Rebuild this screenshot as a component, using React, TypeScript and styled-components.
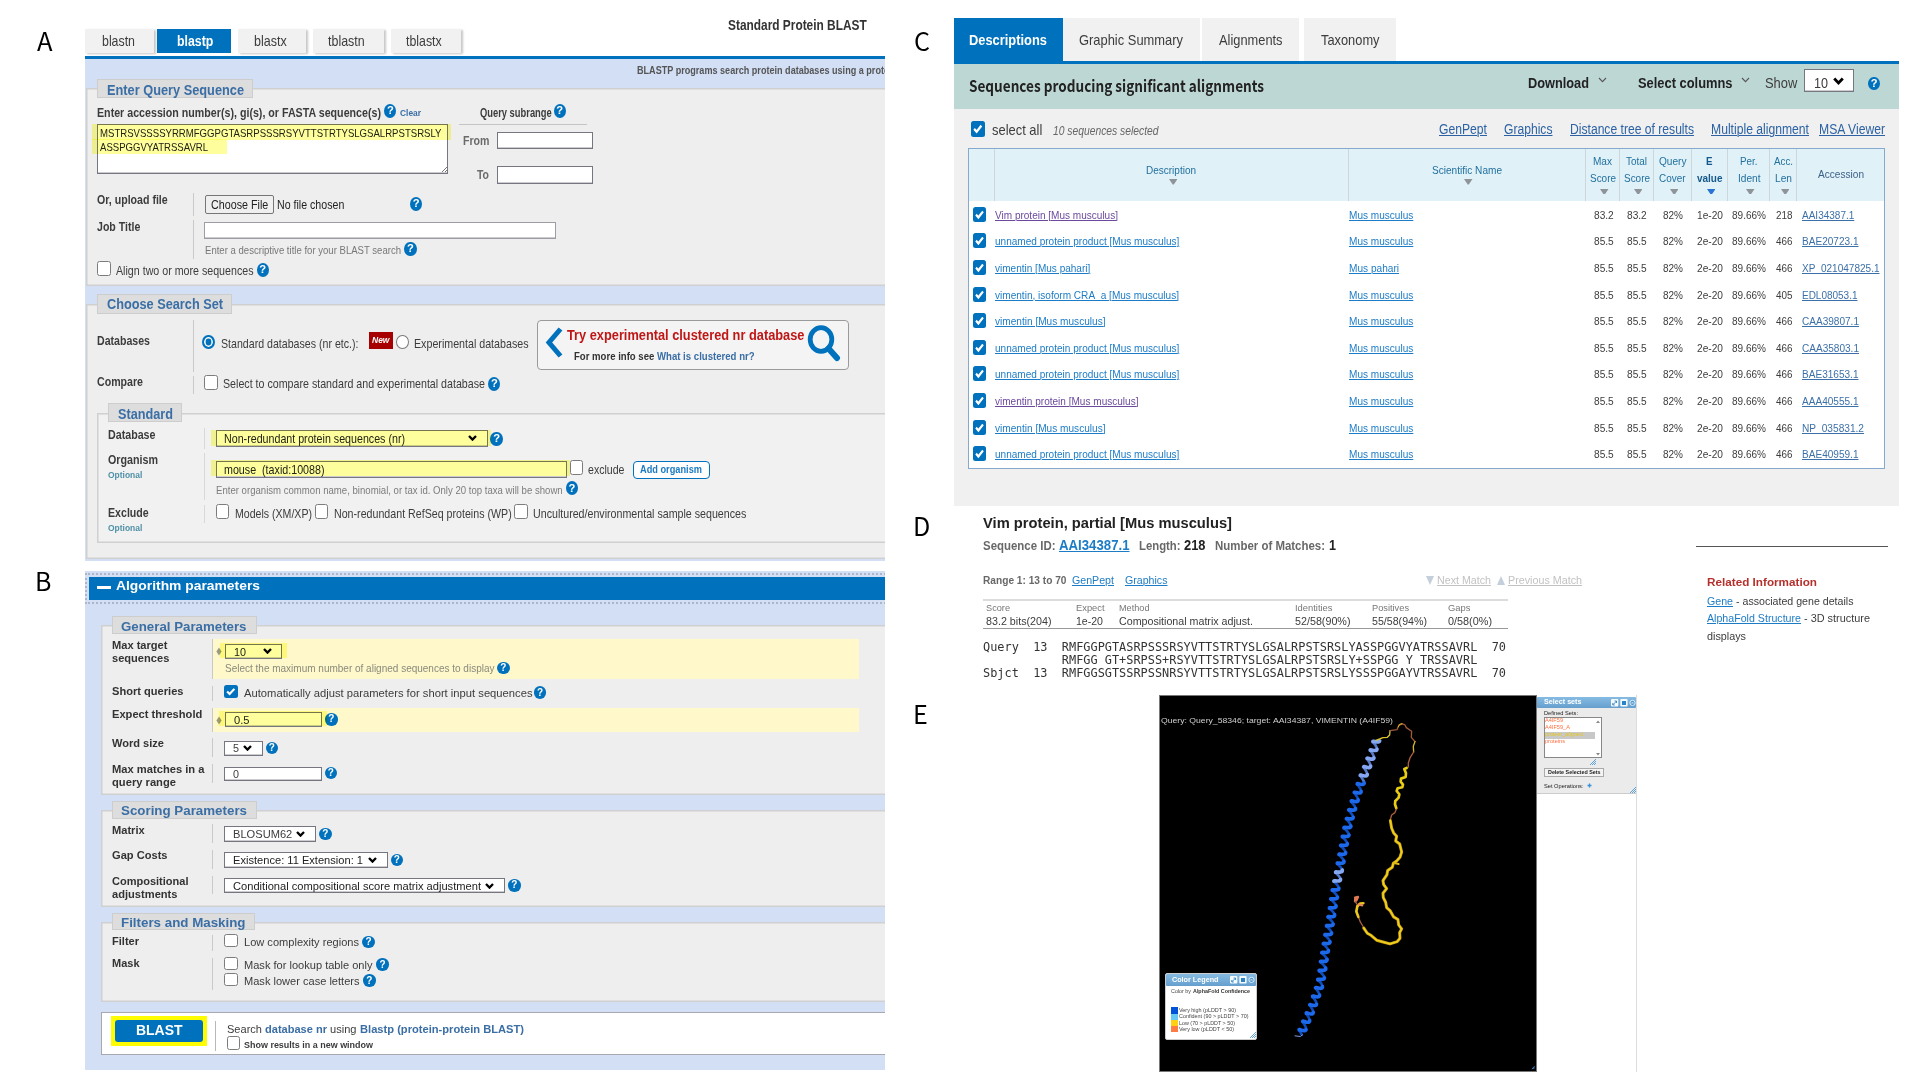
import React, { useLayoutEffect, useRef, useState } from "react";
import styled, { createGlobalStyle, css } from "styled-components";

const SANS = '"Liberation Sans", Arial, sans-serif';
const SOURCE = '"Noto Sans CJK SC", "Noto Sans", sans-serif';
const MONO = '"DejaVu Sans Mono", monospace';
const BLUE = "#0071bc";

const Global = createGlobalStyle`
  * { box-sizing: border-box; }
  body { margin: 0; background: #fff; font-family: ${SANS}; color: #333; overflow: hidden; }
`;

/* ---------- text ---------- */

type TextProps = {
  w: number; // drawn width
  fs?: number; // font size
  b: number; // baseline distance from the top of the parent row
  ml?: number;
  color?: string;
  bold?: boolean;
  italic?: boolean;
  under?: boolean;
  font?: string;
  shift?: number;
  children: string;
};

const TextBox = styled.span<{ $w: number; $fs: number; $b: number; $ml: number; $shift: number }>`
  display: block;
  flex: none;
  width: ${(p) => p.$w}px;
  height: ${(p) => p.$fs * 1.2}px;
  line-height: ${(p) => p.$fs * 1.2}px;
  font-size: ${(p) => p.$fs}px;
  margin-top: calc(${(p) => p.$b - (0.6 + p.$shift) * p.$fs}px + var(--nudge, 0px));
  margin-left: ${(p) => p.$ml}px;
`;

const Glyphs = styled.span<{ $color: string; $bold?: boolean; $italic?: boolean; $under?: boolean; $font: string }>`
  display: inline-block;
  white-space: pre;
  transform-origin: 0 50%;
  color: ${(p) => p.$color};
  font-family: ${(p) => p.$font};
  font-weight: ${(p) => (p.$bold ? 700 : 400)};
  font-style: ${(p) => (p.$italic ? "italic" : "normal")};
  text-decoration: ${(p) => (p.$under ? "underline" : "none")};
  text-decoration-thickness: 1px;
  vertical-align: top;
`;

/* Condenses or widens its text so that it fills the given width. */
function T({ w, fs = 12.2, b, ml = 0, color = "#3c3c3c", bold, italic, under, font = SANS, shift = 0.3465, children }: TextProps) {
  const ref = useRef<HTMLSpanElement>(null);
  const [scale, setScale] = useState(1);
  useLayoutEffect(() => {
    const el = ref.current!;
    el.style.transform = "none";
    const natural = el.getBoundingClientRect().width;
    const next = natural ? w / natural : 1;
    el.style.transform = `scaleX(${next})`;
    setScale(next);
  }, [w, fs, children]);
  return (
    <TextBox $w={w} $fs={fs} $b={b} $ml={ml} $shift={shift}>
      <Glyphs ref={ref} $color={color} $bold={bold} $italic={italic} $under={under} $font={font} style={{ transform: `scaleX(${scale})` }}>
        {children}
      </Glyphs>
    </TextBox>
  );
}

/* ---------- layout parts ---------- */

const Page = styled.main`
  display: grid;
  grid-template-columns: 85px 800px 69px 966px;
  width: 1920px;
  height: 1080px;
  background: #fff;
  overflow: hidden;
`;
const Column = styled.div<{ $ml?: number; $w?: number; $mt?: number }>`
  display: flex;
  flex-direction: column;
  flex: none;
  margin-left: ${(p) => p.$ml ?? 0}px;
  margin-top: ${(p) => p.$mt ?? 0}px;
  ${(p) => p.$w && css`width: ${p.$w}px;`}
`;
const Row = styled.div<{ $h: number; $mt?: number; $ml?: number }>`
  display: flex;
  align-items: flex-start;
  flex: none;
  height: ${(p) => p.$h}px;
  margin-top: ${(p) => p.$mt ?? 0}px;
  padding-left: ${(p) => p.$ml ?? 0}px;
`;
const LabelCol = styled.div<{ $w: number; $pad: number; $line?: string }>`
  display: flex;
  flex-direction: column;
  flex: none;
  width: ${(p) => p.$w}px;
  height: 100%;
  padding-left: ${(p) => p.$pad}px;
  border-right: 1px solid ${(p) => p.$line ?? "#c9c9c9"};
`;
const Fieldset = styled.section<{ $h: number; $mt: number; $ml: number; $bg?: string }>`
  display: flex;
  flex-direction: column;
  flex: none;
  height: ${(p) => p.$h}px;
  margin: ${(p) => p.$mt}px -6px 0 ${(p) => p.$ml}px;
  background: ${(p) => p.$bg ?? "#eeeeee"};
  box-shadow: inset 0 0 0 1.5px #d0d0d0;
`;
const Legend = styled.div<{ $w: number; $h: number; $mt: number; $ml: number }>`
  display: flex;
  align-items: flex-start;
  flex: none;
  width: ${(p) => p.$w}px;
  height: ${(p) => p.$h}px;
  margin: ${(p) => p.$mt}px 0 0 ${(p) => p.$ml}px;
  background: #dddddd;
  box-shadow: inset 0 0 0 1px #cdcdcd;
`;

/* ---------- form parts ---------- */

const HelpDot = styled.span<{ $ml: number; $mt: number; $w: number; $h: number }>`
  display: flex;
  align-items: center;
  justify-content: center;
  flex: none;
  width: ${(p) => p.$w}px;
  height: ${(p) => p.$h}px;
  margin: ${(p) => p.$mt}px 0 0 ${(p) => p.$ml}px;
  border-radius: 50%;
  background: ${BLUE};
  color: #fff;
  font: 700 ${(p) => p.$h * 0.8}px/1 ${SANS};
`;
const Help = ({ ml = 3, mt, w = 12.2, h = 14 }: { ml?: number; mt: number; w?: number; h?: number }) => (
  <HelpDot $ml={ml} $mt={mt} $w={w} $h={h}>?</HelpDot>
);

const Field = styled.div<{ $w: number; $h: number; $ml?: number; $mt?: number; $bg?: string; $line?: string }>`
  position: relative;
  display: flex;
  align-items: flex-start;
  flex: none;
  width: ${(p) => p.$w}px;
  height: ${(p) => p.$h}px;
  margin: ${(p) => p.$mt ?? 0}px 0 0 ${(p) => p.$ml ?? 0}px;
  background: ${(p) => p.$bg ?? "#fff"};
  border: 1px solid ${(p) => p.$line ?? "#767680"};
  box-shadow: inset 0 -1px 0 rgba(110, 110, 120, 0.35);
`;
const Mark = styled.span<{ $x: number; $y: number; $w: number; $h: number }>`
  position: absolute;
  left: ${(p) => p.$x}px;
  top: ${(p) => p.$y}px;
  width: ${(p) => p.$w}px;
  height: ${(p) => p.$h}px;
  background: #feff9c;
  mix-blend-mode: multiply;
`;
const Box = styled.span<{ $w: number; $h: number; $ml: number; $mt: number; $on?: boolean }>`
  display: flex;
  align-items: center;
  justify-content: center;
  flex: none;
  width: ${(p) => p.$w}px;
  height: ${(p) => p.$h}px;
  margin: ${(p) => p.$mt}px 0 0 ${(p) => p.$ml}px;
  background: ${(p) => (p.$on ? BLUE : "#fff")};
  border: ${(p) => (p.$on ? "none" : "1px solid #7c7c7c")};
  border-radius: 2.5px;
`;
const Check = ({ ml, mt, w = 13.5, h = 15, on }: { ml: number; mt: number; w?: number; h?: number; on?: boolean }) => (
  <Box $w={w} $h={h} $ml={ml} $mt={mt} $on={on}>
    {on && (
      <svg width={w} height={h} viewBox="0 0 13 13" preserveAspectRatio="none">
        <path d="M3 6.6 L5.4 9 L10 3.9" fill="none" stroke="#fff" strokeWidth="2.1" />
      </svg>
    )}
  </Box>
);
const Radio = styled.span<{ $ml: number; $mt: number; $on?: boolean }>`
  flex: none;
  width: 13px;
  height: 14.5px;
  margin: ${(p) => p.$mt}px 0 0 ${(p) => p.$ml}px;
  border-radius: 50%;
  border: ${(p) => (p.$on ? `2px solid ${BLUE}` : "1px solid #7c7c7c")};
  background: ${(p) => (p.$on ? BLUE : "#fff")};
  box-shadow: ${(p) => (p.$on ? "inset 0 0 0 1.6px #fff" : "none")};
`;
const Caret = ({ ml, mt, w = 9, h = 6, color = "#000", stroke = 2.3 }: { ml: number; mt: number; w?: number; h?: number; color?: string; stroke?: number }) => (
  <Icon $ml={ml} $mt={mt} width={w} height={h} viewBox="0 0 9 6">
    <path d="M1 1 L4.5 4.6 L8 1" fill="none" stroke={color} strokeWidth={stroke} />
  </Icon>
);
const Icon = styled.svg<{ $ml?: number; $mt?: number }>`
  display: block;
  flex: none;
  margin: ${(p) => p.$mt ?? 0}px 0 0 ${(p) => p.$ml ?? 0}px;
`;
const Rule = styled.span<{ $w: number; $h: number; $ml?: number; $mt?: number; $color: string }>`
  display: block;
  flex: none;
  width: ${(p) => p.$w}px;
  height: ${(p) => p.$h}px;
  margin: ${(p) => p.$mt ?? 0}px 0 0 ${(p) => p.$ml ?? 0}px;
  background: ${(p) => p.$color};
`;

/* ---------- panel A ---------- */

const BlastForm = styled.section`
  --nudge: 0.6px;
  display: flex;
  flex-direction: column;
  height: 560.5px;
  overflow: hidden;
`;
const Tab = styled.span<{ $w: number; $ml: number; $on?: boolean }>`
  display: flex;
  justify-content: center;
  align-items: flex-start;
  flex: none;
  width: ${(p) => p.$w}px;
  height: 24px;
  margin-left: ${(p) => p.$ml}px;
  background: ${(p) => (p.$on ? BLUE : "#f1f1f1")};
  box-shadow: ${(p) => (p.$on ? "none" : "2px 1px 2px rgba(0, 0, 0, 0.22)")};
`;
const FormBody = styled.div`
  display: flex;
  flex-direction: column;
  height: 501.5px;
  margin-top: 3px;
  background: #d2dff5;
  box-shadow: 0 -3px 0 ${BLUE};
`;
const FileButton = styled.span`
  display: flex;
  align-items: flex-start;
  flex: none;
  width: 69px;
  height: 19px;
  margin: 2px 0 0 11px;
  border: 1px solid #767676;
  border-radius: 2px;
  background: #efefef;
`;
const NewBadge = styled.span`
  display: flex;
  align-items: flex-start;
  flex: none;
  width: 24.5px;
  height: 17px;
  margin: 12.5px 0 0 10.5px;
  background: #a60000;
`;
const Promo = styled.div`
  display: flex;
  align-items: flex-start;
  flex: none;
  width: 312px;
  height: 50.5px;
  margin-left: 8px;
  border: 1px solid #9a9a9a;
  border-radius: 4px;
  background: #f4f4f4;
`;
const AddButton = styled.span`
  display: flex;
  align-items: flex-start;
  flex: none;
  width: 77px;
  height: 17.5px;
  margin: 8.5px 0 0 8px;
  border: 1.5px solid ${BLUE};
  border-radius: 4px;
  background: #fff;
`;

const LEG = "#3a6ea5";

function PanelA() {
  return (
    <BlastForm>
      <Row $h={29}>
        <T ml={643} w={138.7} fs={15} b={29.4} bold color="#333">Standard Protein BLAST</T>
      </Row>
      <Row $h={27}>
        <Tab $w={69} $ml={0}><T ml={-1.4} w={33} fs={14.3} b={16.7}>blastn</T></Tab>
        <Tab $w={74} $ml={3.3} $on><T ml={1} w={36.3} fs={14.3} b={16.7} bold color="#fff">blastp</T></Tab>
        <Tab $w={68} $ml={6.7}><T ml={-3} w={32.7} fs={14.3} b={16.7}>blastx</T></Tab>
        <Tab $w={71} $ml={7}><T ml={-4.6} w={36.7} fs={14.3} b={16.7}>tblastn</T></Tab>
        <Tab $w={70} $ml={7}><T ml={-4.6} w={35.7} fs={14.3} b={16.7}>tblastx</T></Tab>
      </Row>
      <FormBody>
        <Row $h={29}>
          <T ml={552} w={252} fs={11} b={14.4} bold color="#555">BLASTP programs search protein databases using a prote</T>
        </Row>
        <Fieldset $h={198} $mt={0} $ml={1}>
          <Legend $w={155.5} $h={19.5} $mt={-9.5} $ml={11.3}><T ml={9.4} w={137} fs={14.3} b={16.2} bold color={LEG}>Enter Query Sequence</T></Legend>
          <Row $h={95}>
            <Column $w={366}>
              <Row $h={26}>
                <T ml={11.3} w={284} b={18.5} bold>Enter accession number(s), gi(s), or FASTA sequence(s)</T>
                <Help mt={6} />
                <T ml={3.2} w={21} fs={9.7} b={18} bold color={LEG}>Clear</T>
              </Row>
              <Field $w={351} $h={50} $ml={11}>
                <Column>
                  <T ml={2} w={341.5} fs={11.5} b={12} color="#222">MSTRSVSSSSYRRMFGGPGTASRPSSSRSYVTTSTRTYSLGSALRPSTSRSLY</T>
                  <T ml={2} w={108} fs={11.5} b={10.8} color="#222">ASSPGGVYATRSSAVRL</T>
                </Column>
                <Mark $x={-6} $y={-1} $w={359} $h={15.5} />
                <Mark $x={-6} $y={14} $w={135} $h={14.5} />
                <Icon $ml={-1} $mt={40} width="8" height="8"><path d="M1 7 L7 1 M4 7 L7 4" stroke="#777" fill="none" /></Icon>
              </Field>
            </Column>
            <Column>
              <Row $h={25.5} $ml={28}>
                <T w={71.7} b={18.5} bold>Query subrange</T>
                <Help ml={2} mt={6} />
              </Row>
              <Rule $w={128} $h={1} $ml={6.7} $color="#c4c4c4" />
              <Row $h={34}>
                <T ml={10.5} w={26.5} b={20.7} bold color="#6b6b6b">From</T>
                <Field $ml={8} $mt={7.5} $w={96} $h={17} />
              </Row>
              <Row $h={30}>
                <T ml={25} w={12} b={20.7} bold color="#6b6b6b">To</T>
                <Field $ml={8} $mt={7.5} $w={96} $h={17.5} />
              </Row>
            </Column>
          </Row>
          <Row $h={23}>
            <LabelCol $w={108} $pad={11.3}><T w={70.7} b={11} bold>Or, upload file</T></LabelCol>
            <FileButton><T ml={4.7} w={57.3} b={13} color="#222">Choose File</T></FileButton>
            <T ml={3.3} w={67.3} b={16} color="#222">No file chosen</T>
            <Help ml={65.4} mt={4} />
          </Row>
          <Row $h={39} $mt={4}>
            <LabelCol $w={108} $pad={11.3}><T w={43.3} b={11} bold>Job Title</T></LabelCol>
            <Column $ml={10}>
              <Field $w={352} $h={17.5} $mt={1.5} $line="#9c9ca4" />
              <Row $h={20}>
                <T ml={1} w={196} fs={11.3} b={15} color="#777">Enter a descriptive title for your BLAST search</T>
                <Help ml={3.4} mt={2.7} />
              </Row>
            </Column>
          </Row>
          <Row $h={20}>
            <Check ml={11} mt={2} />
            <T ml={5.5} w={137.5} b={16}>Align two or more sequences</T>
            <Help ml={3} mt={3.7} />
          </Row>
        </Fieldset>

        <Fieldset $h={255} $mt={17.5} $ml={1}>
          <Legend $w={135} $h={20} $mt={-10} $ml={11.3}><T ml={9.4} w={116} fs={14.3} b={15.7} bold color={LEG}>Choose Search Set</T></Legend>
          <Row $h={52.5} $mt={6}>
            <LabelCol $w={108} $pad={11.3}><T w={53} b={25.4} bold>Databases</T></LabelCol>
            <Radio $ml={8} $mt={15.3} $on />
            <T ml={5.8} w={137.5} b={28.7}>Standard databases (nr etc.):</T>
            <NewBadge><T ml={3.5} w={17.5} fs={9} b={11} bold italic color="#fff">New</T></NewBadge>
            <Radio $ml={2.8} $mt={15.3} />
            <T ml={5} w={114.5} b={28.7}>Experimental databases</T>
            <Promo>
              <Icon $ml={7.5} $mt={6.5} width="18" height="32"><path d="M15.5 2 L4 15.5 L15.5 29" fill="none" stroke={BLUE} strokeWidth="5" /></Icon>
              <Column $ml={4}>
                <T w={237.4} fs={14} b={18.9} bold color="#bf1616">Try experimental clustered nr database</T>
                <Row $h={20}>
                  <T ml={6.5} w={80.3} fs={11.5} b={16.4} bold color="#333">For more info see</T>
                  <T ml={2.8} w={97.6} fs={11.5} b={16.4} bold color={LEG}>What is clustered nr?</T>
                </Row>
              </Column>
              <Icon $ml={3} $mt={3} width="34" height="38">
                <ellipse cx="14" cy="15.5" rx="10.8" ry="11.8" fill="none" stroke={BLUE} strokeWidth="4.8" />
                <path d="M21.5 24.5 L30 34" stroke={BLUE} strokeWidth="6" strokeLinecap="round" />
              </Icon>
            </Promo>
          </Row>
          <Row $h={18} $mt={3.5}>
            <LabelCol $w={108} $pad={11.3}><T w={46} b={10.4} bold>Compare</T></LabelCol>
            <Check ml={10.4} mt={-0.8} />
            <T ml={5.4} w={262} b={12.9}>Select to compare standard and experimental database</T>
            <Help mt={1.2} />
          </Row>
          <Fieldset $h={130.5} $mt={19} $ml={11.3} $bg="#f1f1f1">
            <Legend $w={74} $h={19} $mt={-10} $ml={11}><T ml={9.5} w={55} fs={14.3} b={16.3} bold color={LEG}>Standard</T></Legend>
            <Row $h={21} $mt={6}>
              <LabelCol $w={108} $pad={11} $line="#d8d8d8"><T w={47.5} b={11} bold>Database</T></LabelCol>
              <Field $w={272} $h={17.5} $ml={10.5} $mt={2}>
                <T ml={7.5} w={181} b={12.8} color="#222">Non-redundant protein sequences (nr)</T>
                <Caret ml={62.5} mt={4.5} />
                <Mark $x={-5.5} $y={-1} $w={279.5} $h={16.5} />
              </Field>
              <Help ml={2.7} mt={4} />
            </Row>
            <Row $h={47} $mt={4}>
              <LabelCol $w={108} $pad={11} $line="#d8d8d8">
                <T w={50} b={11.3} bold>Organism</T>
                <T w={34.3} fs={9.5} b={10} bold color="#4f90a8">Optional</T>
              </LabelCol>
              <Column $ml={10.5}>
                <Row $h={26}>
                  <Field $w={351} $h={17} $mt={8.3}>
                    <T ml={7.5} w={100.5} b={12.4} color="#222">{"mouse\u00a0 (taxid:10088)"}</T>
                    <Mark $x={-6} $y={-2} $w={359} $h={16} />
                  </Field>
                  <Check ml={3} mt={7} />
                  <T ml={5} w={36.5} b={21.3}>exclude</T>
                  <AddButton><T ml={6.3} w={62} fs={11.5} b={11.3} bold color="#1b7bc4">Add organism</T></AddButton>
                </Row>
                <Row $h={20}>
                  <T w={346.7} fs={10.8} b={15} color="#7c7c7c">Enter organism common name, binomial, or tax id. Only 20 top taxa will be shown</T>
                  <Help ml={3.3} mt={2.8} />
                </Row>
              </Column>
            </Row>
            <Row $h={18} $mt={5.5}>
              <LabelCol $w={108} $pad={11} $line="#d8d8d8">
                <T w={40.7} b={11.6} bold>Exclude</T>
                <T w={34.3} fs={9.5} b={10} bold color="#4f90a8">Optional</T>
              </LabelCol>
              <Check ml={10.5} mt={-0.7} />
              <T ml={5.5} w={77} b={13.4}>Models (XM/XP)</T>
              <Check ml={3} mt={-0.7} />
              <T ml={5.5} w={177.7} b={13.4}>Non-redundant RefSeq proteins (WP)</T>
              <Check ml={2.9} mt={-0.7} />
              <T ml={5.4} w={213.3} b={13.4}>Uncultured/environmental sample sequences</T>
            </Row>
          </Fieldset>
        </Fieldset>
      </FormBody>
    </BlastForm>
  );
}

/* ---------- panel B ---------- */

const Params = styled.section`
  --nudge: 0.4px;
  display: flex;
  flex-direction: column;
  height: 499px;
  margin-top: 10.5px;
  background: #d2dff5;
  overflow: hidden;
`;
const ParamsHeader = styled.header`
  display: flex;
  align-items: flex-start;
  flex: none;
  height: 22.5px;
  margin: 6px -8px 0 4px;
  background: ${BLUE};
  outline: 2px dotted #adb6c8;
  outline-offset: 2px;
`;
const Changed = styled.div`
  display: flex;
  flex-direction: column;
  flex: none;
  width: 646px;
  height: 100%;
  background: #fef8cb;
`;
const SubmitBox = styled.div`
  display: flex;
  align-items: flex-start;
  flex: none;
  height: 43px;
  margin: 10.5px -6px 0 15.5px;
  background: #fff;
  border: 1px solid #a8a8b0;
`;
const SubmitGlow = styled.span`
  flex: none;
  width: 96px;
  height: 30px;
  margin: 2.5px 0 0 9.7px;
  padding: 4px;
  background: #fdfd00;
`;
const Submit = styled.span`
  display: flex;
  align-items: flex-start;
  justify-content: center;
  height: 22px;
  border-radius: 3px;
  background: ${BLUE};
`;
const Diamond = () => (
  <Icon $ml={3} $mt={8} width="6" height="9"><path d="M3 0.5 L5.6 4.5 L3 8.5 L0.4 4.5 Z" fill="#9a9a84" /></Icon>
);
const PLabel = ({ lines, b }: { lines: [string, number][]; b: number[] }) => (
  <LabelCol $w={112.5} $pad={11.5}>
    {lines.map(([s, w], i) => <T key={s} w={w} fs={11.3} b={b[i]} bold color="#333">{s}</T>)}
  </LabelCol>
);
const PHelp = ({ ml = 3, mt }: { ml?: number; mt: number }) => <Help ml={ml} mt={mt - 0.3} w={12.5} h={12.5} />;

function PanelB() {
  const fs = 11.3;
  return (
    <Params>
      <ParamsHeader>
        <Rule $w={14} $h={2.6} $ml={8} $mt={9.3} $color="#fff" />
        <T ml={5} w={144} fs={13.3} b={13.6} bold color="#fff">Algorithm parameters</T>
      </ParamsHeader>
      <Fieldset $h={170} $mt={25.5} $ml={15.5}>
        <Legend $w={145.5} $h={17.5} $mt={-9} $ml={11.2}><T ml={9.7} w={125.5} fs={13} b={14.7} bold color={LEG}>General Parameters</T></Legend>
        <Row $h={40} $mt={5.5}>
          <PLabel lines={[["Max target", 55.5], ["sequences", 57.3]]} b={[10.4, 9.7]} />
          <Changed>
            <Row $h={20}>
              <Diamond />
              <Field $w={57} $h={15.5} $ml={3} $mt={4.5}>
                <T ml={7.5} w={12} fs={fs} b={11.6} color="#222">10</T>
                <Caret ml={17.5} mt={3.5} />
                <Mark $x={-6} $y={-2} $w={67} $h={15} />
              </Field>
            </Row>
            <Row $h={20}>
              <T ml={11.5} w={269.5} fs={10.2} b={13.5} color="#8a8a7c">Select the maximum number of aligned sequences to display</T>
              <PHelp mt={2.8} />
            </Row>
          </Changed>
        </Row>
        <Row $h={15} $mt={7}>
          <PLabel lines={[["Short queries", 71.5]]} b={[9.7]} />
          <Check ml={11} mt={-1} h={13} on />
          <T ml={6.5} w={288.5} fs={fs} b={11.5}>Automatically adjust parameters for short input sequences</T>
          <PHelp ml={1.2} mt={0.7} />
        </Row>
        <Row $h={24} $mt={7}>
          <PLabel lines={[["Expect threshold", 90.3]]} b={[10.2]} />
          <Changed>
            <Row $h={24}>
              <Diamond />
              <Field $w={97} $h={15} $ml={3} $mt={4}>
                <T ml={7.5} w={15.5} fs={fs} b={11} color="#222">0.5</T>
                <Mark $x={-7.5} $y={-2} $w={108} $h={14.5} />
              </Field>
              <PHelp mt={5.3} />
            </Row>
          </Changed>
        </Row>
        <Row $h={19} $mt={6}>
          <PLabel lines={[["Word size", 52]]} b={[9.7]} />
          <Field $w={38.5} $h={15} $ml={11} $mt={2.5}>
            <T ml={7.5} w={6} fs={fs} b={11}>5</T>
            <Caret ml={4.5} mt={3.5} />
          </Field>
          <PHelp mt={3.8} />
        </Row>
        <Row $h={19} $mt={7}>
          <PLabel lines={[["Max matches in a", 92.5], ["query range", 64]]} b={[9.5, 9.8]} />
          <Field $w={97.5} $h={14.5} $ml={11} $mt={2.5}><T ml={7.5} w={6} fs={fs} b={11}>0</T></Field>
          <PHelp mt={2.8} />
        </Row>
      </Fieldset>

      <Fieldset $h={97} $mt={15} $ml={15.5}>
        <Legend $w={145.5} $h={17.5} $mt={-9} $ml={11.2}><T ml={9.7} w={126} fs={13} b={13.7} bold color={LEG}>Scoring Parameters</T></Legend>
        <Row $h={19} $mt={5.5}>
          <PLabel lines={[["Matrix", 32.7]]} b={[10]} />
          <Field $w={92} $h={15.5} $ml={11} $mt={2}>
            <T ml={8} w={59.3} fs={fs} b={11.6}>BLOSUM62</T><Caret ml={3.7} mt={4} />
          </Field>
          <PHelp mt={3.8} />
        </Row>
        <Row $h={19} $mt={7}>
          <PLabel lines={[["Gap Costs", 55.5]]} b={[9.7]} />
          <Field $w={163.5} $h={15.5} $ml={11} $mt={2}>
            <T ml={8} w={130} fs={fs} b={11.6} color="#222">Existence: 11 Extension: 1</T><Caret ml={4.5} mt={4} />
          </Field>
          <PHelp mt={3.8} />
        </Row>
        <Row $h={18} $mt={7}>
          <PLabel lines={[["Compositional", 76.5], ["adjustments", 65.5]]} b={[9.3, 9.8]} />
          <Field $w={281} $h={15.5} $ml={11} $mt={1.5}>
            <T ml={8} w={248} fs={fs} b={11.6} color="#222">Conditional compositional score matrix adjustment</T><Caret ml={4} mt={4} />
          </Field>
          <PHelp mt={3.3} />
        </Row>
      </Fieldset>

      <Fieldset $h={80} $mt={14.5} $ml={15.5}>
        <Legend $w={143.7} $h={17} $mt={-8.5} $ml={11.2}><T ml={9.7} w={124.5} fs={13} b={14} bold color={LEG}>Filters and Masking</T></Legend>
        <Row $h={16} $mt={5}>
          <PLabel lines={[["Filter", 27]]} b={[9.8]} />
          <Check ml={11} mt={-1} h={13.3} />
          <T ml={6.5} w={115} fs={fs} b={11.5}>Low complexity regions</T>
          <PHelp ml={3.2} mt={1} />
        </Row>
        <Row $h={32} $mt={7}>
          <PLabel lines={[["Mask", 27.5]]} b={[9.7]} />
          <Column $ml={11}>
            <Row $h={16}>
              <Check ml={0} mt={-1} h={13.3} />
              <T ml={6.5} w={128.5} fs={fs} b={11.3}>Mask for lookup table only</T>
              <PHelp ml={3.7} mt={0.7} />
            </Row>
            <Row $h={16}>
              <Check ml={0} mt={-1} h={13.3} />
              <T ml={6.5} w={115.5} fs={fs} b={11}>Mask lower case letters</T>
              <PHelp ml={3.5} mt={0.7} />
            </Row>
          </Column>
        </Row>
      </Fieldset>

      <SubmitBox>
        <SubmitGlow><Submit><T w={46.5} fs={14} b={15.5} bold color="#fff">BLAST</T></Submit></SubmitGlow>
        <Rule $w={1.2} $h={30} $ml={8} $mt={8} $color="#b8b8b8" />
        <Column $ml={10.3}>
          <Row $h={23.5}>
            <T w={35} fs={11.7} b={20}>Search</T>
            <T ml={3.5} w={62} fs={11.7} b={20} bold color={LEG}>database nr</T>
            <T ml={3.3} w={26.5} fs={11.7} b={20}>using</T>
            <T ml={3.2} w={164} fs={11.7} b={20} bold color={LEG}>Blastp (protein-protein BLAST)</T>
          </Row>
          <Row $h={16}>
            <Check ml={0} mt={-0.3} h={13.3} />
            <T ml={4.3} w={129} fs={9.3} b={11.7} bold>Show results in a new window</T>
          </Row>
        </Column>
      </SubmitBox>
    </Params>
  );
}

/* ---------- panel C ---------- */

const Results = styled.section`
  display: flex;
  flex-direction: column;
  flex: none;
  width: 944.5px;
  height: 487.5px;
  margin-top: 18px;
  background: #f0f0f0;
`;
const ResultTabs = styled.nav`
  display: flex;
  flex: none;
  height: 46px;
  background: #fff;
  border-bottom: 3px solid ${BLUE};
`;
const ResultTab = styled.span<{ $w: number; $ml: number; $on?: boolean }>`
  display: flex;
  justify-content: center;
  align-items: flex-start;
  flex: none;
  width: ${(p) => p.$w}px;
  margin-left: ${(p) => p.$ml}px;
  background: ${(p) => (p.$on ? BLUE : "#f1f1f1")};
`;
const Band = styled.header`
  display: flex;
  align-items: flex-start;
  flex: none;
  height: 45px;
  background: #bdd8d4;
`;
const HitTable = styled.div`
  flex: none;
  width: 916.5px;
  margin-left: 14px;
  padding-bottom: 1px;
  border: 1px solid #86a9cf;
  background: #fff;
`;
const gridCols = css`
  display: grid;
  grid-template-columns: 25.5px 354.5px 237.3px 34.2px 33.5px 38px 36.3px 42.2px 27px 86px;
`;
const HeadRow = styled.div`
  ${gridCols}
  height: 52px;
  background: #e0f1f8;
`;
const HeadCell = styled.div<{ $last?: boolean }>`
  display: flex;
  flex-direction: column;
  align-items: center;
  border-right: ${(p) => (p.$last ? "none" : "1px solid #cdd6da")};
`;
const HitRow = styled.div`
  ${gridCols}
  height: 26.65px;
`;
const HitCell = styled.div<{ $center?: boolean }>`
  display: flex;
  align-items: flex-start;
  justify-content: ${(p) => (p.$center ? "center" : "flex-start")};
`;
const Sort = ({ mt, on }: { mt: number; on?: boolean }) => (
  <Icon $ml={3} $mt={mt} width="8.5" height="5.5" viewBox="0 0 8.5 5.5"><path d="M0 0 H8.5 L4.8 5.5 H3.7 Z" fill={on ? "#2a72d4" : "#8f9499"} /></Icon>
);

const MM = "[Mus musculus]";
const hits: [string, number, string, string, string, string, number, boolean?][] = [
  [`Vim protein ${MM}`, 123, "83.2", "1e-20", "218", "AAI34387.1", 52.3, true],
  [`unnamed protein product ${MM}`, 184.3, "85.5", "2e-20", "466", "BAE20723.1", 56.5],
  ["vimentin [Mus pahari]", 95.3, "85.5", "2e-20", "466", "XP_021047825.1", 77.5],
  [`vimentin, isoform CRA_a ${MM}`, 184, "85.5", "2e-20", "405", "EDL08053.1", 55.5],
  [`vimentin ${MM}`, 110.5, "85.5", "2e-20", "466", "CAA39807.1", 57],
  [`unnamed protein product ${MM}`, 184.3, "85.5", "2e-20", "466", "CAA35803.1", 57],
  [`unnamed protein product ${MM}`, 184.3, "85.5", "2e-20", "466", "BAE31653.1", 56.5],
  [`vimentin protein ${MM}`, 143.5, "85.5", "2e-20", "466", "AAA40555.1", 56.5, true],
  [`vimentin ${MM}`, 110.5, "85.5", "2e-20", "466", "NP_035831.2", 62],
  [`unnamed protein product ${MM}`, 184.3, "85.5", "2e-20", "466", "BAE40959.1", 56.5],
];
const heads: [string, number, string, number, boolean?][] = [
  ["Max", 19, "Score", 26],
  ["Total", 21, "Score", 26],
  ["Query", 27.5, "Cover", 26.5],
  ["E", 6.5, "value", 25.5, true],
  ["Per.", 17.5, "Ident", 22.5],
  ["Acc.", 19, "Len", 17],
];

function PanelC() {
  const head = "#23719f";
  const link = "#1d7cc6";
  const tool = "#2c62a3";
  return (
    <Results>
      <ResultTabs>
        <ResultTab $w={108.5} $ml={0} $on><T w={78} fs={15} b={27.3} bold color="#fff">Descriptions</T></ResultTab>
        <ResultTab $w={137} $ml={0.5}><T ml={-1.2} w={104} fs={15} b={27.3}>Graphic Summary</T></ResultTab>
        <ResultTab $w={97.5} $ml={1.7}><T w={63.5} fs={15} b={27.3}>Alignments</T></ResultTab>
        <ResultTab $w={91.5} $ml={5}><T w={58.5} fs={15} b={27.3}>Taxonomy</T></ResultTab>
      </ResultTabs>
      <Band>
        <T ml={15} w={295} fs={16.3} b={28.4} bold font={SOURCE} shift={0.436} color="#222">Sequences producing significant alignments</T>
        <T ml={264.3} w={61} fs={14.5} b={24.3} bold color="#222">Download</T>
        <Caret ml={9} mt={13.2} w={9} h={6} color="#555" stroke={1.1} />
        <T ml={31} w={94.5} fs={14.5} b={24.3} bold color="#222">Select columns</T>
        <Caret ml={8.5} mt={13.2} w={9} h={6} color="#555" stroke={1.1} />
        <T ml={14.5} w={32.3} fs={14.5} b={24.3}>Show</T>
        <Field $w={49.5} $h={23} $ml={7} $mt={5}>
          <T ml={9} w={14} fs={14.5} b={18.4}>10</T>
          <Caret ml={4.5} mt={6.5} w={11} h={8} />
        </Field>
        <Help ml={14.7} mt={12.7} w={11.8} h={13.8} />
      </Band>
      <Row $h={39}>
        <Check ml={17} mt={12} h={15.5} on />
        <T ml={7.2} w={50.3} fs={14.5} b={26.3}>select all</T>
        <T ml={11.3} w={105.5} fs={12.3} b={26.7} italic color="#666">10 sequences selected</T>
        <T ml={280.3} w={48} fs={14.7} b={26} under color={tool}>GenPept</T>
        <T ml={17} w={48.5} fs={14.7} b={26} under color={tool}>Graphics</T>
        <T ml={17.5} w={124} fs={14.7} b={26} under color={tool}>Distance tree of results</T>
        <T ml={17} w={98} fs={14.7} b={26} under color={tool}>Multiple alignment</T>
        <T ml={9.5} w={66} fs={14.7} b={26} under color={tool}>MSA Viewer</T>
      </Row>
      <HitTable>
        <HeadRow>
          <HeadCell />
          <HeadCell><T w={50} fs={11.7} b={25.5} color={head}>Description</T><Sort mt={2} /></HeadCell>
          <HeadCell><T w={70} fs={11.7} b={25.5} color={head}>Scientific Name</T><Sort mt={2} /></HeadCell>
          {heads.map(([a, aw, c, cw, on], i) => (
            <HeadCell key={i}>
              <T w={aw} fs={11.7} b={16.5} bold={on} color={on ? "#155a8c" : head}>{a}</T>
              <T w={cw} fs={11.7} b={14.1} bold={on} color={on ? "#155a8c" : head}>{c}</T>
              <Sort mt={3} on={on} />
            </HeadCell>
          ))}
          <HeadCell $last><T ml={2} w={46} fs={11.7} b={28.8} color="#3c6288">Accession</T></HeadCell>
        </HeadRow>
        {hits.map(([d, dw, score, e, len, acc, aw, seen], i) => (
          <HitRow key={i}>
            <HitCell><Check ml={4} mt={5.6} w={13} h={15} on /></HitCell>
            <HitCell><T ml={0.3} w={dw} fs={11.7} b={17.7} under color={seen ? "#6b4a9e" : link}>{d}</T></HitCell>
            <HitCell><T w={i === 2 ? 50 : 64.3} fs={11.7} b={17.7} under color={link}>{i === 2 ? "Mus pahari" : "Mus musculus"}</T></HitCell>
            <HitCell $center><T w={19.7} fs={11.7} b={17.7}>{score}</T></HitCell>
            <HitCell $center><T w={19.7} fs={11.7} b={17.7}>{score}</T></HitCell>
            <HitCell $center><T w={20} fs={11.7} b={17.7}>82%</T></HitCell>
            <HitCell $center><T w={26} fs={11.7} b={17.7}>{e}</T></HitCell>
            <HitCell $center><T w={34} fs={11.7} b={17.7}>89.66%</T></HitCell>
            <HitCell $center><T w={16.5} fs={11.7} b={17.7}>{len}</T></HitCell>
            <HitCell><T ml={5} w={aw} fs={11.7} b={17.7} under color="#3c70a8">{acc}</T></HitCell>
          </HitRow>
        ))}
      </HitTable>
    </Results>
  );
}

/* ---------- panel D ---------- */

const Alignment = styled.section`
  display: flex;
  flex: none;
  height: 189.5px;
  padding-left: 29.4px;
`;
const ScoreTable = styled.div`
  display: flex;
  flex: none;
  width: 525px;
  height: 30.5px;
  margin-top: 3.3px;
  padding-left: 2.9px;
  border-top: 2px solid #dcdcdc;
  border-bottom: 1px solid #999;
`;
const stats: [string, number, string, number, number][] = [
  ["Score", 24, "83.2 bits(204)", 65.5, 89.7],
  ["Expect", 28.5, "1e-20", 27, 43.3],
  ["Method", 30.5, "Compositional matrix adjust.", 134, 175.4],
  ["Identities", 37.5, "52/58(90%)", 55.5, 77.3],
  ["Positives", 37, "55/58(94%)", 55, 76.5],
  ["Gaps", 22.5, "0/58(0%)", 44, 50],
];

function PanelD() {
  const link = "#1d7cc6";
  const dim = "#686868";
  return (
    <Alignment>
      <Column $w={713}>
        <Row $h={27.5}><T w={249} fs={15} b={22.5} bold color="#222">Vim protein, partial [Mus musculus]</T></Row>
        <Row $h={33}>
          <T w={72.5} fs={13} b={17.7} bold color={dim}>Sequence ID:</T>
          <T ml={3.4} w={70.5} fs={14.3} b={17.5} bold under color={link}>AAI34387.1</T>
          <T ml={9.2} w={41.5} fs={13} b={17.7} bold color={dim}>Length:</T>
          <T ml={4} w={21.5} fs={14.3} b={17.5} bold color="#222">218</T>
          <T ml={9.2} w={110} fs={13} b={17.7} bold color={dim}>Number of Matches:</T>
          <T ml={4} w={7} fs={14.3} b={17.5} bold color="#222">1</T>
        </Row>
        <Row $h={29.5}>
          <T w={83.5} fs={11.7} b={18.2} bold color={dim}>Range 1: 13 to 70</T>
          <T ml={5.2} w={42} fs={11.7} b={18.2} under color={link}>GenPept</T>
          <T ml={11} w={42.5} fs={11.7} b={18.2} under color={link}>Graphics</T>
          <Icon $ml={258} $mt={9.5} width="8" height="9"><path d="M0 0 H8 L4 9 Z" fill="#c3cfda" /></Icon>
          <T ml={3.3} w={54} fs={11.7} b={18.2} under color="#c2c2c2">Next Match</T>
          <Icon $ml={6} $mt={9.5} width="8" height="9"><path d="M0 9 H8 L4 0 Z" fill="#c3cfda" /></Icon>
          <T ml={3.2} w={74} fs={11.7} b={18.2} under color="#c2c2c2">Previous Match</T>
        </Row>
        <ScoreTable>
          {stats.map(([k, kw, v, vw, col]) => (
            <Column key={k} $w={col}>
              <T w={kw} fs={9.8} b={10} color="#777">{k}</T>
              <T w={vw} fs={11.5} b={12.2}>{v}</T>
            </Column>
          ))}
        </ScoreTable>
        <T w={523} fs={12.8} b={22} font={MONO} color="#333">Query  13  RMFGGPGTASRPSSSRSYVTTSTRTYSLGSALRPSTSRSLYASSPGGVYATRSSAVRL  70</T>
        <T w={523} fs={12.8} b={9.6} font={MONO} color="#333">{"           RMFGG GT+SRPSS+RSYVTTSTRTYSLGSALRPSTSRSLY+SSPGG Y TRSSAVRL    "}</T>
        <T w={523} fs={12.8} b={9.8} font={MONO} color="#333">Sbjct  13  RMFGGSGTSSRPSSNRSYVTTSTRTYSLGSALRPSTSRSLYSSSPGGAYVTRSSAVRL  70</T>
      </Column>
      <Column>
        <Rule $w={192} $h={1.2} $mt={40} $color="#555" />
        <Column $ml={10.6}>
          <Row $h={23} $mt={23}><T w={110} fs={11.8} b={16.5} bold color="#b5302c">Related Information</T></Row>
          <Row $h={17.5}>
            <T w={26} fs={11.5} b={13.2} under color={link}>Gene</T>
            <T ml={3} w={117.5} fs={11.5} b={13.2}>- associated gene details</T>
          </Row>
          <Row $h={17.5}>
            <T w={94} fs={11.5} b={12.7} under color={link}>AlphaFold Structure</T>
            <T ml={3.2} w={66} fs={11.5} b={12.7}>- 3D structure</T>
          </Row>
          <Row $h={17.5}><T w={39} fs={11.5} b={12.7}>displays</T></Row>
        </Column>
      </Column>
    </Alignment>
  );
}

/* ---------- panel E ---------- */

const Viewer = styled.section`
  display: flex;
  flex: none;
  width: 478px;
  height: 377px;
  margin-left: 205px;
  border-right: 1px solid #ddd;
`;
const Stage = styled.div`
  position: relative;
  flex: none;
  width: 378px;
  height: 376.5px;
  background: #000;
  border: 1px solid #777;
`;
const Caption = styled.div`
  position: absolute;
  left: 1px;
  top: 0.7px;
`;
const LegendWindow = styled.div`
  position: absolute;
  left: 4.5px;
  top: 277.3px;
  width: 92.5px;
  height: 67px;
  display: flex;
  flex-direction: column;
  background: #fff;
  border: 1px solid #ccc;
  border-radius: 2px;
`;
const TitleBar = styled.div`
  display: flex;
  align-items: flex-start;
  flex: none;
  height: 11.5px;
  background: linear-gradient(#86bce3, #659fce);
  border-radius: 1px;
`;
const SetsWindow = styled.div`
  display: flex;
  flex-direction: column;
  flex: none;
  width: 99px;
  height: 97px;
  margin-top: 1.5px;
  background: #ebebeb;
  border-bottom: 1px solid #ccc;
`;
const SetList = styled.div`
  display: flex;
  flex: none;
  width: 58.5px;
  height: 41px;
  margin: 0.5px 0 0 6.5px;
  border: 1px solid #888;
  background: #fff;
`;
const SetItem = styled.div<{ $on?: boolean }>`
  display: flex;
  align-items: flex-start;
  flex: none;
  width: 50.5px;
  height: 6.9px;
  background: ${(p) => (p.$on ? "#c8c8c8" : "transparent")};
`;
const DeleteButton = styled.div`
  display: flex;
  align-items: flex-start;
  flex: none;
  width: 60px;
  height: 9.3px;
  margin: 3.5px 0 0 6.5px;
  border: 1px solid #aaa;
  background: #f4f4f4;
`;
const WindowButtons = ({ ml }: { ml: number }) => (
  <Icon $ml={ml} $mt={2} width="25" height="8" viewBox="0 0 25 8">
    <rect x="0" y="0" width="7.3" height="7.6" rx="1" fill="#f4fafe" />
    <path d="M2 5.7 L5.3 2.3 M3.6 2 H5.5 V4 M1.8 4 V6 H3.7" stroke="#2b83c6" strokeWidth="0.9" fill="none" />
    <rect x="9.3" y="0" width="7.3" height="7.6" rx="1" fill="#f4fafe" />
    <rect x="11" y="2" width="4" height="4" fill="#2b83c6" />
    <circle cx="21.5" cy="3.9" r="2.6" fill="#4f96cd" stroke="#e4f1fb" strokeWidth="1" />
    <path d="M20.6 3 L22.4 4.8 M22.4 3 L20.6 4.8" stroke="#fff" strokeWidth="0.6" />
  </Icon>
);
const Grip = ({ ml, mt }: { ml: number; mt: number }) => (
  <Icon $ml={ml} $mt={mt} width="6" height="6"><path d="M0 6 L6 0 M2 6 L6 2 M4 6 L6 4" stroke="#4f9ad6" strokeWidth="0.9" /></Icon>
);

/* Axis of the helix, from its top to its bottom end. */
const axis: [number, number][] = [[682, 146], [668, 190], [640, 260], [612, 340], [592, 415], [576, 500], [557, 600], [543, 690], [527, 780], [512, 880], [488, 950], [452, 1034]];

function helix() {
  const parts: { d: string; color: string; width: number }[] = [];
  const pts: { x: number; y: number; s: number }[] = [];
  let run = 0;
  for (let i = 0; i < axis.length - 1; i++) {
    const [x0, y0] = axis[i];
    const [x1, y1] = axis[i + 1];
    const len = Math.hypot(x1 - x0, y1 - y0);
    const ux = (x1 - x0) / len;
    const uy = (y1 - y0) / len;
    for (let s = 0; s < len; s += 1.5) {
      const ph = ((run + s) / 27.2) * Math.PI * 2;
      const a = Math.cos(ph) * 9.5;
      const t = Math.sin(ph) * 2 + Math.cos(ph) * 3;
      pts.push({ x: x0 + ux * s + uy * a + ux * t, y: y0 + uy * s - ux * a + uy * t, s: run + s });
    }
    run += len;
  }
  const half = 13.6;
  for (let k = 0; k * half < run; k++) {
    const seg = pts.filter((p) => p.s >= k * half - 1.6 && p.s <= (k + 1) * half + 1.6);
    if (seg.length < 2) continue;
    const y = seg[0].y;
    const pale = y < 255 || (y > 520 && y < 568);
    const front = k % 2 === 0;
    parts.push({
      d: "M" + seg.map((p) => `${p.x.toFixed(1)} ${p.y.toFixed(1)}`).join(" L"),
      color: pale ? (front ? "#85a6f0" : "#5577cc") : front ? "#1c69ec" : "#0f4dbd",
      width: front ? 11 : 8,
    });
  }
  return parts.sort((a, b) => a.width - b.width);
}

const Protein = () => (
  <svg width="376" height="374.5" viewBox="31 17 1128 1124" fill="none" strokeLinejoin="round" strokeLinecap="round">
    {helix().map((p, i) => <path key={i} d={p.d} stroke={p.color} strokeWidth={p.width} />)}
    <path d="M436 1037 L452 1039 L458 1034" stroke="#7f9fe0" strokeWidth="3" />
    <path d="M679 150 L690 146 L700 142 L713 141 L720 134 L721 121" stroke="#d8c32a" strokeWidth="4" />
    <path d="M721 121 L742 118 L748 104 L758 101 L766 104 L770 112 L786 123 L785 141 L796 154" stroke="#9c5a38" strokeWidth="4" />
    <path d="M746 110 L750 102 L757 100" stroke="#d8b82a" strokeWidth="3" />
    <path d="M796 154 L791 168 L792 185" stroke="#d8b82a" strokeWidth="4" />
    <path d="M792 185 L781 203 L776 218 L776 230" stroke="#a95f3e" strokeWidth="4" />
    <path d="M771 233 L764 236 L769 249 L768 260 L754 265 L753 274 L760 283 L758 291 L744 294 L741 302 L749 312 L747 322 L737 332 L736 342 L740 354" stroke="#e8cd14" strokeWidth="8" />
    <path d="M740 357 L736 367 L726 374 L722 388" stroke="#a95f3e" strokeWidth="4" />
    <path d="M722 391 L726 414 L732 428 L741 438 L738 452 L750 461 L756 485 L751 501 L741 512 L731 519 L728 531 L714 541 L712 553 L700 571 L702 583 L711 595 L700 609 L701 622 L708 636 L711 652 L722 662 L732 680 L745 688 L747 704 L756 716 L750 727 L751 744 L743 754 L721 761 L703 756 L681 750 L665 736 L653 729 L642 713" stroke="#c79a08" strokeWidth="9" />
    <path d="M722 391 L726 414 L732 428 L741 438 L738 452 L750 461 L756 485 L751 501 L741 512 L731 519 L728 531 L714 541 L712 553 L700 571 L702 583 L711 595 L700 609 L701 622 L708 636 L711 652 L722 662 L732 680 L745 688 L747 704 L756 716 L750 727 L751 744 L743 754 L721 761 L703 756 L681 750 L665 736 L653 729 L642 713" stroke="#eed024" strokeWidth="5" />
    <path d="M733 518 L747 521" stroke="#e0b818" strokeWidth="6" />
    <path d="M640 708 L632 695 L627 682" stroke="#a95f3e" strokeWidth="4" />
    <path d="M626 680 L620 664 L623 648 L631 640 L641 639" stroke="#ecc51e" strokeWidth="8" />
    <path d="M628 643 L638 646" stroke="#e98559" strokeWidth="6" />
    <path d="M616 622 L625 620 L620 631 L616 633 L617 624" stroke="#e07a50" strokeWidth="7" />
    <path d="M617 634 L622 642" stroke="#b0603f" strokeWidth="4" />
    <path d="M1148 1136 L1154 1129 M1152 1136 L1154 1133" stroke="#3a7fc0" strokeWidth="3" />
  </svg>
);

const legend: [string, string, number][] = [
  ["#0053d6", "Very high (pLDDT > 90)", 57],
  ["#65cbf3", "Confident (90 > pLDDT > 70)", 69.5],
  ["#ffd013", "Low (70 > pLDDT > 50)", 56],
  ["#ff7d45", "Very low (pLDDT < 50)", 55],
];

function PanelE() {
  return (
    <Viewer>
      <Stage>
        <Protein />
        <Caption><T w={232} fs={8} b={27} color="#d0d0d0">Query: Query_58346; target: AAI34387, VIMENTIN (A4IF59)</T></Caption>
        <LegendWindow>
          <TitleBar>
            <T ml={6} w={46.5} fs={7.6} b={7.8} bold color="#fff">Color Legend</T>
            <WindowButtons ml={11.5} />
          </TitleBar>
          <Row $h={21.5}>
            <T ml={5.8} w={20} fs={6} b={8} color="#444">Color by</T>
            <T ml={1.7} w={57} fs={6} b={8} bold color="#333">AlphaFold Confidence</T>
          </Row>
          {legend.map(([c, s, w]) => (
            <Row key={s} $h={6.3}>
              <Rule $w={7} $h={6.3} $ml={5.3} $color={c} />
              <T ml={1.7} w={w} fs={6} b={5.3} color="#444">{s}</T>
            </Row>
          ))}
          <Grip ml={84} mt={0} />
        </LegendWindow>
      </Stage>
      <SetsWindow>
        <TitleBar>
          <T ml={7} w={37.5} fs={7.6} b={8} bold color="#fff">Select sets</T>
          <WindowButtons ml={29.5} />
        </TitleBar>
        <Row $h={8.5}><T ml={6.5} w={34} fs={6} b={7.2} color="#222">Defined Sets:</T></Row>
        <SetList>
          <Column>
            <SetItem><T w={18} fs={6} b={4.7} color="#ff7040">A4IF59</T></SetItem>
            <SetItem><T w={25} fs={6} b={4.7} color="#ff7040">A4IF59_A</T></SetItem>
            <SetItem $on><T w={38} fs={6} b={4.7} color="#e6c81c">protein_aligned</T></SetItem>
            <SetItem><T w={20} fs={6} b={5} color="#ff7040">proteins</T></SetItem>
          </Column>
          <Icon width="6" height="39"><path d="M1 5 L3 2.5 L5 5 Z M1 35 L3 37.5 L5 35 Z" fill="#888" /></Icon>
        </SetList>
        <Grip ml={53} mt={0.5} />
        <DeleteButton><T ml={3} w={52.5} fs={6} b={5.8} bold color="#222">Delete Selected Sets</T></DeleteButton>
        <Row $h={15}>
          <T ml={6.5} w={39.5} fs={6} b={11} color="#222">Set Operations:</T>
          <Icon $ml={3.5} $mt={6} width="5" height="5"><path d="M2.5 0.5 V4.5 M0.5 2.5 H4.5" stroke="#3a93dc" strokeWidth="1.4" /></Icon>
          <Grip ml={38} mt={10} />
        </Row>
      </SetsWindow>
    </Viewer>
  );
}

/* ---------- page ---------- */

const Letter = ({ w, b, ml, children }: { w: number; b: number; ml: number; children: string }) => (
  <T w={w} fs={25} b={b} ml={ml} font={SOURCE} shift={0.436} color="#000">{children}</T>
);

export default function App() {
  return (
    <Page>
      <Global />
      <Column>
        <Row $h={540}><Letter w={15.5} b={51.3} ml={36.8}>A</Letter></Row>
        <Row $h={540}><Letter w={16.4} b={51.3} ml={35.3}>B</Letter></Row>
      </Column>
      <Column>
        <PanelA />
        <PanelB />
      </Column>
      <Column>
        <Row $h={500}><Letter w={16} b={51} ml={28.8}>C</Letter></Row>
        <Row $h={190}><Letter w={17.3} b={35.7} ml={27.5}>D</Letter></Row>
        <Row $h={390}><Letter w={14.8} b={33.5} ml={27.8}>E</Letter></Row>
      </Column>
      <Column>
        <PanelC />
        <PanelD />
        <PanelE />
      </Column>
    </Page>
  );
}
